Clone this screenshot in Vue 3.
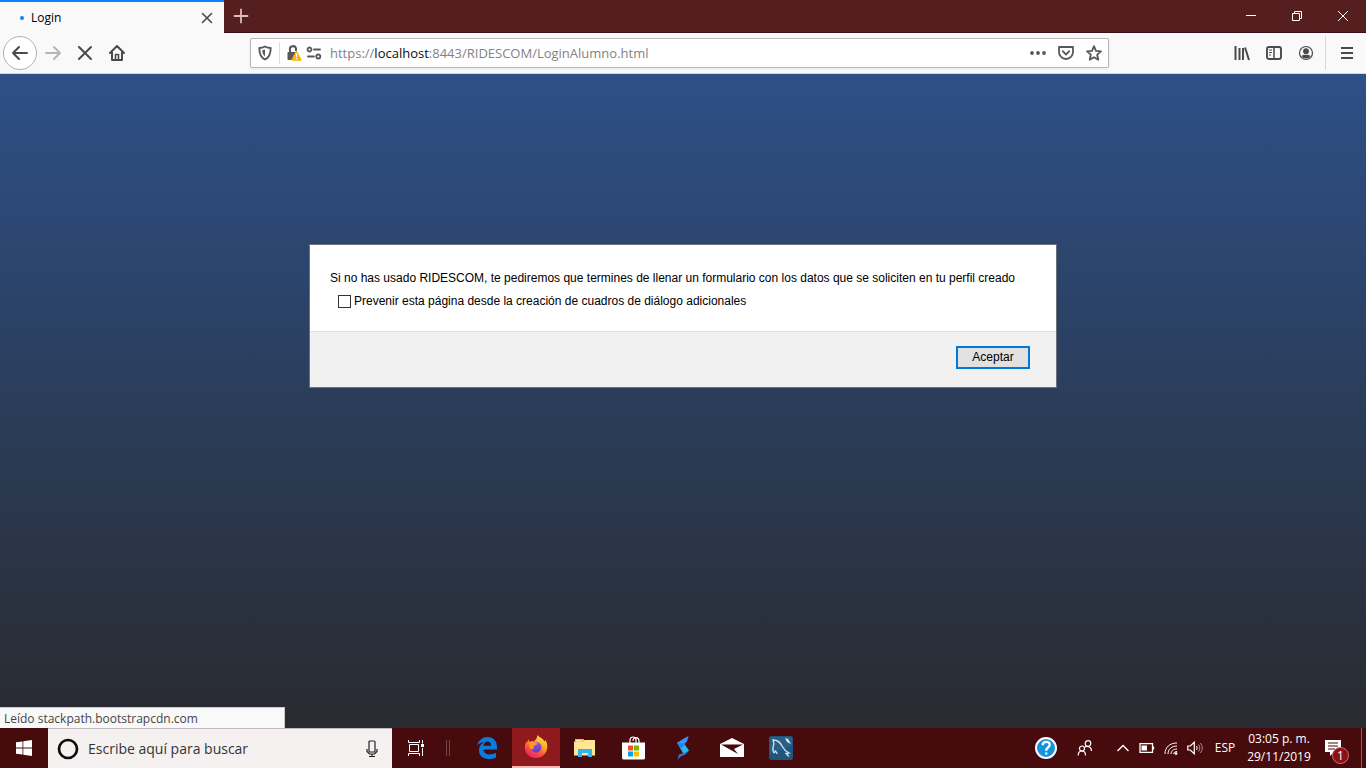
<script setup>
import { ref } from 'vue'

const url = { scheme: 'https://', host: 'localhost', path: ':8443/RIDESCOM/LoginAlumno.html' }
const suppress = ref(false)
const open = ref(true)
const query = ref('')
</script>

<template>
  <div class="screen">
    <header class="titlebar">
      <div class="tab">
        <span class="dot"></span>
        <span class="tab-title">Login</span>
        <button class="plain tab-close" aria-label="Cerrar pestaña">
          <svg width="12" height="12" viewBox="0 0 12 12"><path d="M1.500 1.500l9 9M10.500 1.500l-9 9" stroke="#4a4a4c" stroke-width="1.600" fill="none" stroke-linecap="round" /></svg>
        </button>
      </div>
      <button class="plain new-tab" aria-label="Nueva pestaña">
        <svg width="16" height="16" viewBox="0 0 16 16"><path d="M8 1.500v13M1.500 8h13" stroke="#d8bcbe" stroke-width="1.800" stroke-linecap="round" /></svg>
      </button>
      <div class="window-buttons">
        <button class="plain" aria-label="Minimizar"><svg width="12" height="12" viewBox="0 0 12 12"><path d="M1 5.500h10" stroke="#fff" /></svg></button>
        <button class="plain" aria-label="Restaurar"><svg width="12" height="12" viewBox="0 0 12 12" fill="none" stroke="#fff"><path d="M1.500 3.500h7v7h-7zM3.500 3.500v-2h7v7h-2" /></svg></button>
        <button class="plain" aria-label="Cerrar"><svg width="12" height="12" viewBox="0 0 12 12"><path d="M1 1l10 10M11 1L1 11" stroke="#fff" /></svg></button>
      </div>
    </header>

    <nav class="toolbar">
      <button class="plain back" aria-label="Atrás">
        <svg width="18" height="18" viewBox="0 0 18 18" class="line"><path d="M16 9H2M8 3L2 9l6 6" /></svg>
      </button>
      <button class="plain tool" aria-label="Adelante">
        <svg width="18" height="18" viewBox="0 0 18 18" class="line faded"><path d="M2 9h14M10 3l6 6-6 6" /></svg>
      </button>
      <button class="plain tool" aria-label="Detener">
        <svg width="16" height="16" viewBox="0 0 16 16" class="line"><path d="M2 2l12 12M14 2L2 14" /></svg>
      </button>
      <button class="plain tool" aria-label="Inicio">
        <svg width="18" height="18" viewBox="0 0 18 18" class="line"><path d="M2 9l7-7 7 7M4 8.500V16h10V8.500" /><path d="M7.500 15.500v-5h3v5" stroke-width="1.600" /></svg>
      </button>
      <span class="spacer"></span>
      <div class="urlbar">
        <svg width="16" height="16" viewBox="0 0 16 16"><path d="M8 1.500C6 2.700 4 3 2.300 3c0 5.500.8 9.300 5.700 11.500 4.900-2.200 5.700-6 5.700-11.500C12 3 10 2.700 8 1.500z" fill="none" stroke="#58585a" stroke-width="1.900" stroke-linejoin="round" /><path d="M8 4.500v7C6 9.800 5.400 8 5.300 5.200z" fill="#58585a" /></svg>
        <span class="url-sep"></span>
        <svg width="16" height="16" viewBox="0 0 16 16"><path d="M4 8V5a3 3 0 0 1 6-1.500V6" fill="none" stroke="#58585a" stroke-width="2" /><rect x="1.500" y="7" width="9" height="8" rx="1" fill="#58585a" /><path d="M10.500 6.500L15 15H6z" fill="#ffb400" stroke="#ffb400" stroke-width="1.500" stroke-linejoin="round" /><path d="M10.500 8.500v3.500M10.500 13v1.300" stroke="#fff" stroke-width="1.300" /></svg>
        <svg class="permissions" width="16" height="16" viewBox="0 0 16 16" fill="none" stroke="#58585a" stroke-width="1.800"><circle cx="3.500" cy="4.500" r="2" /><path d="M8 4.500h6M2 11.500h6" stroke-linecap="round" /><circle cx="12.300" cy="11.500" r="2" /></svg>
        <div class="address">{{ url.scheme }}<b>{{ url.host }}</b>{{ url.path }}</div>
        <button class="plain url-action" aria-label="Acciones de página"><svg width="16" height="16" viewBox="0 0 16 16" fill="#58585a"><circle cx="2" cy="8" r="1.900" /><circle cx="8" cy="8" r="1.900" /><circle cx="14" cy="8" r="1.900" /></svg></button>
        <button class="plain url-action" aria-label="Guardar en Pocket"><svg width="16" height="16" viewBox="0 0 16 16" fill="none" stroke="#58585a" stroke-width="1.800" stroke-linejoin="round" stroke-linecap="round"><path d="M1 2h14v5a7 7 0 0 1-14 0z" /><path d="M4.700 6.200L8 9.500l3.300-3.300" /></svg></button>
        <button class="plain url-action" aria-label="Añadir a marcadores"><svg width="16" height="16" viewBox="0 0 16 16" fill="none" stroke="#58585a" stroke-width="1.800" stroke-linejoin="round"><path d="M8 1.200l2 4.600 5 .5-3.800 3.400 1.100 5L8 12.200l-4.300 2.500 1.100-5L1 6.300l5-.5z" /></svg></button>
      </div>
      <span class="spacer"></span>
      <button class="plain tool" aria-label="Catálogo"><svg width="16" height="16" viewBox="0 0 16 16" stroke="#4a4a4c" stroke-width="2"><path d="M1.500 1v14M5.500 3v12M9 3v12" /><path d="M11 2.500l4 12.500" /></svg></button>
      <button class="plain tool" aria-label="Barra lateral"><svg width="16" height="16" viewBox="0 0 16 16" fill="none" stroke="#4a4a4c"><rect x="1" y="2" width="14" height="12" rx="2" stroke-width="1.900" /><path d="M8 2v12" stroke-width="1.500" /><path d="M3 5h3M3 7.500h3M3 10h2" /></svg></button>
      <button class="plain tool" aria-label="Cuenta"><svg width="16" height="16" viewBox="0 0 16 16"><circle cx="8" cy="8" r="6.500" fill="none" stroke="#4a4a4c" stroke-width="1.200" /><circle cx="8" cy="6.200" r="2.900" fill="#4a4a4c" /><path d="M3.300 11c1.200-1 2.500-1.300 4.700-1.300s3.500.3 4.700 1.300A5.600 5.600 0 0 1 8 13.500 5.600 5.600 0 0 1 3.300 11z" fill="#4a4a4c" /></svg></button>
      <span class="tool-sep"></span>
      <button class="plain tool" aria-label="Abrir menú"><svg width="14" height="14" viewBox="0 0 14 14" stroke="#4a4a4c" stroke-width="2"><path d="M1 2h12M1 7h12M1 12h12" /></svg></button>
    </nav>

    <main class="page">
      <form v-if="open" class="dialog" @submit.prevent="open = false">
        <div class="dialog-body">
          <p>Si no has usado RIDESCOM, te pediremos que termines de llenar un formulario con los datos que se soliciten en tu perfil creado</p>
          <label class="check" for="suppress">
            <input id="suppress" v-model="suppress" type="checkbox">
            Prevenir esta página desde la creación de cuadros de diálogo adicionales
          </label>
        </div>
        <div class="dialog-foot"><button class="accept" type="submit">Aceptar</button></div>
      </form>
      <div class="status">Leído stackpath.bootstrapcdn.com</div>
    </main>

    <footer class="taskbar">
      <button class="plain app" aria-label="Inicio de Windows">
        <svg width="16" height="16" viewBox="0 0 16 16" fill="#fff"><path d="M0 2.300l6.500-.9v6.200H0zM7.300 1.300L16 0v7.600H7.300zM0 8.400h6.500v6.200L0 13.700zM7.300 8.400H16V16l-8.700-1.300z" /></svg>
      </button>
      <div class="search">
        <svg width="22" height="22" viewBox="0 0 22 22"><circle cx="11" cy="11" r="9" fill="none" stroke="#0c0c0c" stroke-width="2.700" /></svg>
        <input v-model="query" type="text" aria-label="Buscar" placeholder="Escribe aquí para buscar">
        <button class="plain" aria-label="Dictar"><svg width="12" height="18" viewBox="0 0 12 18" fill="none" stroke="#222" stroke-width="1.200"><rect x="3" y="1" width="6" height="11" rx="1" /><path d="M1 9v2.500L3.500 14h5L11 11.500V9M6 14v2.500M3 16.500h6" /></svg></button>
      </div>
      <button class="plain app" aria-label="Vista de tareas">
        <svg width="18" height="16" viewBox="0 0 18 16" fill="none" stroke="#fff"><path d="M2.500 4.500h9v7h-9zM1.500 0v2.500h11V0M1.500 16v-2.500h11V16M15.500 0v3.500M15.500 8v8" /><path d="M14 4h3v3h-3z" fill="#fff" stroke="none" /></svg>
      </button>
      <span class="grip"></span>
      <div class="apps">
        <button class="plain app" aria-label="Edge">
          <svg width="22" height="22" viewBox="0 0 22 22"><path d="M1 9.200C2.200 3.400 6.400 0 11.500 0 17.800 0 21 4.500 21 10v2.500H7.400c.2 3.300 3 5 6.300 5 2.200 0 4.400-.5 6.300-1.700v4.600C17.800 21.600 15.200 22 12.500 22 6.700 22 3 18.600 3 13.300c0-3.700 2-6.700 5.300-8.200-4 .3-6.200 2-7.300 4.100zM7.500 8.800h7.600c0-2.500-1.200-4.200-3.600-4.200-2.200 0-3.600 1.800-4 4.200z" fill="#0a7be0" /></svg>
        </button>
        <button class="plain app active" aria-label="Firefox">
          <svg width="24" height="24" viewBox="0 0 24 24">
            <defs>
              <linearGradient id="fox" x1=".8" y1="0" x2=".25" y2="1"><stop offset="0" stop-color="#fff24a" /><stop offset=".35" stop-color="#ffad22" /><stop offset=".7" stop-color="#ff4b3e" /><stop offset="1" stop-color="#e91b75" /></linearGradient>
              <linearGradient id="globe" x1="0" y1="0" x2="0" y2="1"><stop offset="0" stop-color="#a44dd8" /><stop offset="1" stop-color="#5443c7" /></linearGradient>
            </defs>
            <path d="M13.500 0c2 2.500 5.500 3.600 7 6.500l.8-1.500C23 8 23.600 10.200 23.200 13 22.500 19 17.800 23 12 23 5.500 23 .8 18.500.8 12.500c0-2.300.5-4.200 1.700-6l.3 1.600L4.500 4.300 5.500 7c1.500-.8 2.900-.8 4.300-.3 1.700-1.800 3.700-3.600 3.700-6.700z" fill="url(#fox)" />
            <circle cx="12.200" cy="12.200" r="5.300" fill="url(#globe)" />
            <path d="M5.500 7.200c2.200-1.100 3.800-.8 5.400.3l2.600.8c-.3 1.500-1.600 2-3.400 2.400-1 .7-1.100 2.200 0 3-1.500 1-4 .5-4.600-1.500z" fill="#ff9a24" />
          </svg>
        </button>
        <button class="plain app" aria-label="Explorador">
          <svg width="22" height="20" viewBox="0 0 22 20"><path d="M1 1h9v4H1z" fill="#f5b81f" /><path d="M2 2h6v1H2z" fill="#fff2b5" /><path d="M0 3.500h9l1.500-1.500H21v15.500H0z" fill="#ffe596" /><path d="M4 11h14v8h-4v-4H8v4H4z" fill="#35b4e8" /></svg>
        </button>
        <button class="plain app" aria-label="Microsoft Store">
          <svg width="24" height="24" viewBox="0 0 24 24"><path d="M8 7V4c0-4 6-4 6 0v3M11 5c0-5 6-4 6 0v2" fill="none" stroke="#fff" stroke-width="1.200" /><path d="M0 6.500h23v15.500q0 1.500-2 1.500H2q-2 0-2-1.500z" fill="#fff" /><path d="M6 9.500h5v5H6z" fill="#f25022" /><path d="M12 9.500h5v5h-5z" fill="#7fba00" /><path d="M6 15.500h5v5H6z" fill="#00a4ef" /><path d="M12 15.500h5v5h-5z" fill="#ffb900" /></svg>
        </button>
        <button class="plain app" aria-label="Streamlabs">
          <svg width="14" height="24" viewBox="0 0 14 24"><path d="M12.500 0L11 5.500 8 8 1 7l6-4z" fill="#3d92f4" /><path d="M1 6.500l6-.5 6 8.500-5 4.500z" fill="#27b7f5" /><path d="M1 6.500l4 6 5-5z" fill="#2b80e6" /><path d="M13 14.500L8 17l-5 1.500L1.500 24l3-3.500 4.500-2z" fill="#3a78cc" /></svg>
        </button>
        <button class="plain app" aria-label="Correo">
          <svg width="24" height="20" viewBox="0 0 24 20"><path d="M0 6L12 0l12 6v13H0z" fill="#fff" /><path d="M1 6.500h22L14 11l4 5z" fill="#48090c" /></svg>
        </button>
        <button class="plain app" aria-label="MySQL Workbench">
          <svg width="24" height="24" viewBox="0 0 24 24"><rect width="24" height="24" rx="2.500" fill="#20557d" /><path d="M1 1h22v9L1 18z" fill="#32698f" opacity=".55" /><path d="M5 17c-2-4-1-7 0-9l-1-4c4 0 7 2 9 6 1.500 3 3 5 7 7l-3 .5 3 3M5 17l1.500-2 2 3" fill="none" stroke="#d6e4ed" stroke-width="1.300" /><path d="M16 2l3 1 3 5-4-2z" fill="#e6eef4" /></svg>
        </button>
      </div>

      <div class="tray">
        <button class="plain help" aria-label="Ayuda">
          <svg width="24" height="24" viewBox="0 0 24 24"><circle cx="12" cy="12" r="10" fill="#1593dd" stroke="#fff" stroke-width="2" /><path d="M8.700 9.200c0-4.500 7-4.400 7-.5 0 2.700-3.500 2.800-3.500 6M12.200 16.500v2" fill="none" stroke="#fff" stroke-width="2.300" /></svg>
        </button>
        <button class="plain people" aria-label="Contactos">
          <svg width="16" height="16" viewBox="0 0 16 16" fill="none" stroke="#fff" stroke-width="1.200"><circle cx="5" cy="8.500" r="2.500" /><circle cx="11" cy="3.500" r="2.800" /><path d="M1.200 15.500c0-3 1.500-4.500 3.800-4.500s3.500 1.500 3.500 4.500M8 7c1.500-1 6.500-1 6.500 4" /></svg>
        </button>
        <button class="plain tray-icon" aria-label="Iconos ocultos"><svg width="14" height="10" viewBox="0 0 14 10"><path d="M1.500 8L7 2.500 12.500 8" fill="none" stroke="#fff" stroke-width="1.400" /></svg></button>
        <button class="plain tray-icon" aria-label="Batería"><svg width="16" height="10" viewBox="0 0 16 10"><path d="M1 .7h12.500v8.600H1zM14.500 3.500v3" fill="none" stroke="#fff" stroke-width="1.300" /><path d="M2.500 2.500H8v5H2.500z" fill="#fff" /></svg></button>
        <button class="plain tray-icon" aria-label="Red"><svg width="14" height="14" viewBox="0 0 14 14" fill="none" stroke="#fff"><path d="M1 13C1 6 6 2 13 2M4 13c0-5 4-8 9-8M7 13c0-3 2.500-5 6-5M9.700 13c0-1.500 1.300-2.500 3.300-2.500" /><circle cx="12" cy="12.500" r="1" fill="#fff" /></svg></button>
        <button class="plain tray-icon" aria-label="Volumen"><svg width="16" height="14" viewBox="0 0 16 14" fill="none" stroke="#fff"><path d="M.8 5h2.500l4-3.800v11.600l-4-3.800H.8z" stroke-width="1.200" /><path d="M9.500 5c.8 1.300.8 2.700 0 4" /><path d="M11.500 3.500c1.700 2.300 1.700 4.700 0 7M13.300 2c2.600 3.300 2.600 6.700 0 10" opacity=".55" /></svg></button>
        <span class="lang">ESP</span>
        <time class="clock" datetime="2019-11-29T15:05"><span>03:05 p. m.</span><span>29/11/2019</span></time>
        <button class="plain notices" aria-label="Notificaciones">
          <svg width="17" height="16" viewBox="0 0 17 16"><path d="M0 0h16v12H9l-4 4v-4H0z" fill="#fff" /><path d="M3 3h10M3 6h10M3 9h7" stroke="#48090c" stroke-width="1.100" /></svg>
          <span class="badge">1</span>
        </button>
        <span class="show-desktop"></span>
      </div>
    </footer>
  </div>
</template>

<style>
body { margin: 0; }
</style>

<style scoped>
.screen { display: flex; flex-direction: column; min-height: 100vh; font-family: "Open Sans", "Noto Sans", sans-serif; font-size: 12px; color: #000; }
.screen * { box-sizing: border-box; }
.plain { display: flex; align-items: center; justify-content: center; padding: 0; border: 0; background: none; color: inherit; font: inherit; }
svg { display: block; flex: none; }

.titlebar { display: flex; height: 33px; background: #551e1f; border-bottom: 1px solid #3b1014; }
.tab { display: flex; align-items: center; width: 224px; height: 33px; padding: 0 11px 0 20px; background: #f9f9fa; border-top: 2px solid #0a84ff; }
.dot { width: 4px; height: 4px; border-radius: 50%; background: #0a84ff; }
.tab-title { flex: 1; margin-left: 7px; }
.new-tab { width: 34px; }
.window-buttons { display: flex; margin-left: auto; }
.window-buttons button { width: 46px; }

.toolbar { display: flex; align-items: center; height: 41px; padding: 0 3px; background: #f9f9fa; border-bottom: 1px solid #d6d6da; }
.back { width: 34px; height: 34px; border: 1px solid #b0b0b2; border-radius: 50%; background: #fff; }
.line { fill: none; stroke: #4a4a4c; stroke-width: 2; stroke-linecap: round; stroke-linejoin: round; }
.faded { stroke: #b5b5b7; }
.tool { width: 32px; height: 32px; }
.spacer { flex: 9; }
.urlbar { display: flex; flex: 65; align-items: center; height: 30px; padding: 0 6px; background: #fff; border: 1px solid #b8b8ba; border-radius: 2px; box-shadow: 0 1px 3px rgba(0, 0, 0, .08); }
.url-sep { width: 1px; height: 22px; margin: 0 6px; background: #ddddde; }
.permissions { margin-left: 4px; }
.address { flex: 1; margin-left: 8px; font-size: 13px; line-height: 20px; color: #828285; white-space: nowrap; }
.address b { font-weight: 400; color: #0c0c0d; }
.url-action { width: 28px; height: 28px; }
.urlbar .url-action:last-child { width: 16px; margin-left: 6px; }
.tool-sep { width: 1px; height: 34px; margin: 0 5px 0 3px; background: #d9d9db; }

.page { display: flex; flex: 1; flex-direction: column; align-items: center; justify-content: space-between; padding-top: 170px; background: linear-gradient(#2d5087, #292c32 96%); }
.dialog { width: 748px; max-width: 100%; background: #fff; border: 1px solid #6c7078; font-family: "Liberation Sans", Arial, sans-serif; font-size: 12px; line-height: 16px; }
.dialog-body { padding: 25px 20px 22px; }
.dialog p { margin: 0; }
.check { display: flex; align-items: center; margin: 7px 0 0 8px; gap: 3px; }
.check input { width: 13px; height: 13px; margin: 0; border: 1px solid #333; background: #fff; appearance: none; }
.check input:checked { background: #0078d7; }
.dialog-foot { display: flex; justify-content: flex-end; padding: 14px 26px 18px; background: #f1f1f1; border-top: 1px solid #dfdfdf; }
.accept { width: 74px; height: 23px; padding: 0 0 2px; border: 2px solid #0078d7; background: #e1e1e1; font: inherit; color: #000; }
.status { align-self: flex-start; width: 285px; height: 21px; padding: 0 4px; background: #f9f9fa; border: 1px solid #c9c9cc; border-width: 1px 1px 0 0; line-height: 22px; color: #444; }

.taskbar { display: flex; height: 40px; background: #480b0d; color: #fff; }
.app { width: 48px; height: 40px; }
.active { background: #8e1a1d; border-bottom: 2px solid #ffb3b3; }
.search { display: flex; align-items: center; width: 344px; padding: 0 14px 0 9px; background: #f5f1f1; border-top: 1px solid #c0b9bd; }
.search input { flex: 1; min-width: 0; margin-left: 9px; padding: 0; border: 0; outline: 0; background: none; font: inherit; font-size: 14px; color: #333; }
.search input::placeholder { color: #333; opacity: 1; }
.grip { width: 4px; height: 16px; margin: 12px 13px 0 6px; border: 1px solid #74484a; border-width: 0 1px; }
.apps { display: flex; gap: 1px; }
.tray { display: flex; align-items: stretch; margin-left: auto; }
.help { width: 42px; }
.people { width: 44px; padding-right: 8px; }
.tray-icon { width: 24px; }
.lang { width: 36px; line-height: 40px; text-align: center; }
.clock { display: flex; flex-direction: column; justify-content: center; width: 72px; line-height: 18px; text-align: center; white-space: nowrap; }
.notices { position: relative; width: 46px; padding-right: 10px; }
.badge { position: absolute; top: 19px; left: 17px; width: 17px; height: 17px; border: 1px solid #c87474; border-radius: 50%; background: #8d1015; line-height: 15px; text-align: center; }
.show-desktop { width: 5px; border-left: 1px solid #8b6062; }
</style>
